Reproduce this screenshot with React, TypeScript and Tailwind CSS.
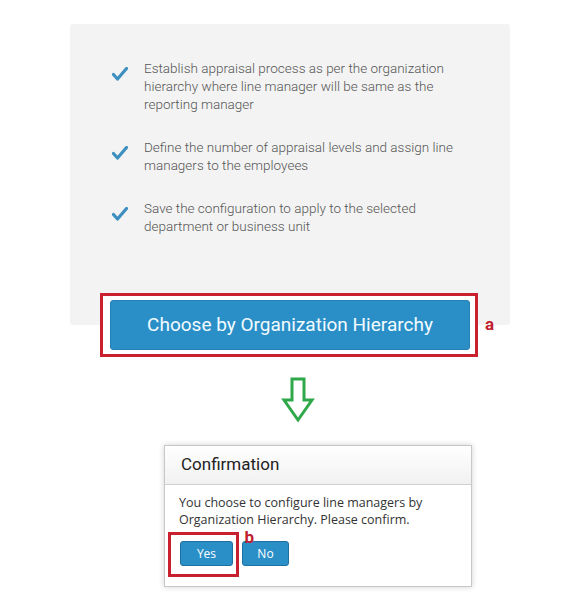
import React from "react";

const Check = () => (
  <svg width="16" height="14" viewBox="0 0 16 14" className="shrink-0">
    <path d="M1.5 7.5 L5.5 12 L14.5 1.5" fill="none" stroke="#3d8fbf" strokeWidth="3.2" strokeLinecap="round" strokeLinejoin="round" />
  </svg>
);

const items = [
  ["Establish appraisal process as per the organization", "hierarchy where line manager will be same as the", "reporting manager"],
  ["Define the number of appraisal levels and assign line", "managers to the employees"],
  ["Save the configuration to apply to the selected", "department or business unit"],
];

export default function App() {
  return (
    <div className="w-[581px] h-[598px] bg-white overflow-hidden" style={{ fontFamily: "Roboto, sans-serif" }}>
      <div className="mt-[24px] ml-[70px] w-[440px] h-[301px] bg-[#f3f3f3] rounded-[3px] pt-[35px] pl-[42px] flex flex-col gap-[25px]">
        {items.map((lines, i) => (
          <div key={i} className="flex items-start gap-[16px]">
            <div className="pt-[8px]"><Check /></div>
            <div className="text-[13.5px] leading-[18px] font-light text-[#555]">
              {lines.map((l, j) => (
                <div key={j}>{l}</div>
              ))}
            </div>
          </div>
        ))}
      </div>
      <div className="mt-[-32px] ml-[100px] flex items-center">
        <div className="w-[378px] h-[64px] border-[3px] border-[#c8202e] bg-white pt-[4px] pb-[4px] pl-[7px] pr-[5px] relative">
          <div className="w-full h-full bg-[#2b8fc7] rounded-[3px] border border-[#2680b5] flex items-center justify-center text-[#f2fbff] text-[19px]">
            Choose by Organization Hierarchy
          </div>
        </div>
        <div className="ml-[7px] text-[#c0202e] font-bold text-[17px] leading-none mt-[-2px]" style={{ fontFamily: "Roboto, sans-serif" }}>a</div>
      </div>
      <div className="ml-[281px] mt-[20px] w-[34px] h-[46px]">
        <svg width="34" height="46" viewBox="0 0 34 46">
          <path d="M11 2 H23 V23 H31 L17 43 L3 23 H11 Z" fill="none" stroke="#2fa84a" strokeWidth="3" strokeLinejoin="miter" />
        </svg>
      </div>
      <div className="ml-[164px] mt-[22px] w-[308px] h-[142px] bg-white border border-[#c8c8c8] shadow-[0_0_6px_rgba(0,0,0,0.18)] flex flex-col" style={{ fontFamily: "'Open Sans', sans-serif" }}>
        <div className="h-[39px] bg-gradient-to-b from-[#ffffff] to-[#f1f1f1] border-b border-[#cfcfcf] flex items-center pl-[16px] text-[17px] text-[#222]" style={{ fontFamily: "Roboto, sans-serif" }}>
          Confirmation
        </div>
        <div className="pl-[14px] pt-[9px] text-[12.5px] leading-[17px] text-[#333]">
          <div>You choose to configure line managers by</div>
          <div>Organization Hierarchy. Please confirm.</div>
        </div>
        <div className="ml-[3px] mt-[4px] flex items-start">
          <div className="w-[71px] h-[45px] border-[3px] border-[#c8202e] p-[6px_4px_0_9px] relative">
            <div className="w-[53px] h-[25px] bg-[#2b8fc7] border border-[#1f6f9f] rounded-[3px] text-white text-[12px] flex items-center justify-center">Yes</div>
            <div className="absolute right-[-18px] top-[-6px] text-[#c0202e] font-bold text-[17px] leading-none" style={{ fontFamily: "Roboto, sans-serif" }}>b</div>
          </div>
          <div className="ml-[3px] mt-[9px] w-[47px] h-[25px] bg-[#2b8fc7] border border-[#1f6f9f] rounded-[3px] text-white text-[12px] flex items-center justify-center">No</div>
        </div>
      </div>
    </div>
  );
}
